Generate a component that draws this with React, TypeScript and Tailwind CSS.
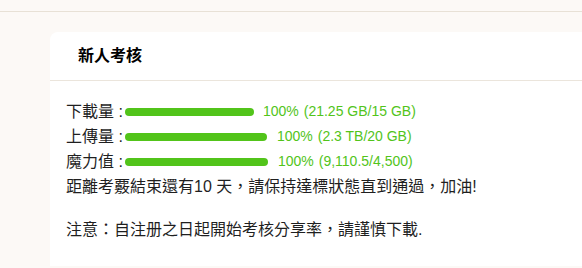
const rows = [
  { label: '下載量', bar: 129, gap: 'ml-[9px]', value: '21.25 GB/15 GB' },
  { label: '上傳量', bar: 142, gap: 'ml-[10px]', value: '2.3 TB/20 GB' },
  { label: '魔力值', bar: 143, gap: 'ml-[10px]', value: '9,110.5/4,500' },
];

export default function App() {
  return (
    <div
      className="h-[268px] w-[582px] overflow-hidden bg-[#fcf9f6] text-[#1f1f1f]"
      style={{ fontFamily: '"Liberation Sans", "Noto Sans CJK TC", sans-serif' }}
    >
      <div className="h-[12px] border-b border-[#e8e1d6]" />
      <div className="pl-[50px] pt-[20px]">
        <div className="rounded-tl-lg bg-white">
          {/* card header */}
          <div className="flex h-[49px] items-center border-b border-[#ebe5dc] pl-[28px]">
            <h2 className="text-[16px] font-bold text-black">新人考核</h2>
          </div>

          {/* card body */}
          <div className="px-4 pt-[18px] pb-6 text-[16px] leading-[25px]">
            {rows.map((row) => (
              <div key={row.label} className="flex items-center">
                <span>{row.label} :</span>
                <div
                  className="ml-[2px] h-[8px] rounded-full bg-[#52c41a]"
                  style={{ width: row.bar }}
                />
                <span className={`${row.gap} text-[14px] text-[#52c41a]`}>
                  100%<span className="ml-[5px]">(</span>
                  {row.value})
                </span>
              </div>
            ))}
            <p>距離考覈結束還有10 天，請保持達標狀態直到通過，加油!</p>
            <p className="mt-[18px]">注意：自注册之日起開始考核分享率，請謹慎下載.</p>
          </div>
        </div>
      </div>
    </div>
  );
}
